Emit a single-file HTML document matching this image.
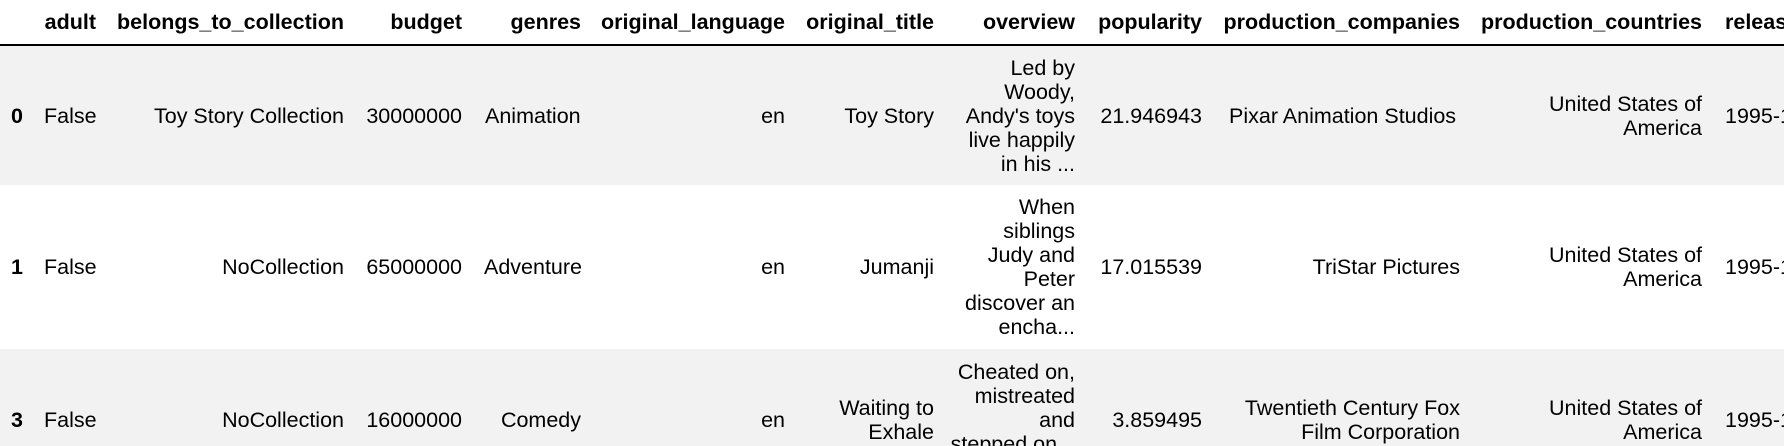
<!DOCTYPE html>
<html><head><meta charset="utf-8"><style>
html,body{margin:0;padding:0;width:1784px;height:446px;overflow:hidden;background:#fff}
#w{position:relative;width:1784px;height:446px;overflow:hidden;font-family:"Liberation Sans",Arial,sans-serif;font-size:21.5px;color:#000}
.r{position:absolute;left:0;width:1784px}
.c{position:absolute;display:flex;align-items:center;line-height:24px;white-space:nowrap}
.R{text-align:right;justify-content:flex-end}
.h{font-weight:bold}
</style></head><body><div id="w">
<div class="r" style="top:44px;height:2px;background:#000"></div>
<div class="r" style="top:46px;height:139px;background:#f2f2f2"></div>
<div class="r" style="top:349px;height:97px;background:#f2f2f2"></div>

<div class="c R h" style="top:0;height:44px;right:1688px">adult</div>
<div class="c R h" style="top:0;height:44px;right:1440px">belongs_to_collection</div>
<div class="c R h" style="top:0;height:44px;right:1322px">budget</div>
<div class="c R h" style="top:0;height:44px;right:1203px">genres</div>
<div class="c R h" style="top:0;height:44px;right:999px">original_language</div>
<div class="c R h" style="top:0;height:44px;right:850px">original_title</div>
<div class="c R h" style="top:0;height:44px;right:709px">overview</div>
<div class="c R h" style="top:0;height:44px;right:582px">popularity</div>
<div class="c R h" style="top:0;height:44px;right:324px">production_companies</div>
<div class="c R h" style="top:0;height:44px;right:82px">production_countries</div>
<div class="c h" style="top:0;height:44px;left:1725px">release_date</div>

<div class="c h" style="top:46px;height:139px;left:11px">0</div>
<div class="c" style="top:46px;height:139px;left:44px">False</div>
<div class="c R" style="top:46px;height:139px;right:1440px">Toy Story Collection</div>
<div class="c R" style="top:46px;height:139px;right:1322px">30000000</div>
<div class="c" style="top:46px;height:139px;left:485px">Animation</div>
<div class="c R" style="top:46px;height:139px;right:999px">en</div>
<div class="c R" style="top:46px;height:139px;right:850px">Toy Story</div>
<div class="c R" style="top:46px;height:139px;right:709px"><div>Led by<br>Woody,<br>Andy's toys<br>live happily<br>in his ...</div></div>
<div class="c R" style="top:46px;height:139px;right:582px">21.946943</div>
<div class="c" style="top:46px;height:139px;left:1229px">Pixar Animation Studios</div>
<div class="c R" style="top:46px;height:139px;right:82px"><div>United States of<br>America</div></div>
<div class="c" style="top:46px;height:139px;left:1725px">1995-10-30</div>

<div class="c h" style="top:185px;height:164px;left:11px">1</div>
<div class="c" style="top:185px;height:164px;left:44px">False</div>
<div class="c R" style="top:185px;height:164px;right:1440px">NoCollection</div>
<div class="c R" style="top:185px;height:164px;right:1322px">65000000</div>
<div class="c" style="top:185px;height:164px;left:484px">Adventure</div>
<div class="c R" style="top:185px;height:164px;right:999px">en</div>
<div class="c R" style="top:185px;height:164px;right:850px">Jumanji</div>
<div class="c R" style="top:185px;height:164px;right:709px"><div>When<br>siblings<br>Judy and<br>Peter<br>discover an<br>encha...</div></div>
<div class="c R" style="top:185px;height:164px;right:582px">17.015539</div>
<div class="c R" style="top:185px;height:164px;right:324px">TriStar Pictures</div>
<div class="c R" style="top:185px;height:164px;right:82px"><div>United States of<br>America</div></div>
<div class="c" style="top:185px;height:164px;left:1725px">1995-12-15</div>

<div class="c h" style="top:349px;height:142px;left:11px">3</div>
<div class="c" style="top:349px;height:142px;left:44px">False</div>
<div class="c R" style="top:349px;height:142px;right:1440px">NoCollection</div>
<div class="c R" style="top:349px;height:142px;right:1322px">16000000</div>
<div class="c R" style="top:349px;height:142px;right:1203px">Comedy</div>
<div class="c R" style="top:349px;height:142px;right:999px">en</div>
<div class="c R" style="top:349px;height:142px;right:850px"><div>Waiting to<br>Exhale</div></div>
<div class="c R" style="top:349px;height:142px;right:709px"><div>Cheated on,<br>mistreated<br>and<br>stepped on...<br>&nbsp;</div></div>
<div class="c R" style="top:349px;height:142px;right:582px">3.859495</div>
<div class="c R" style="top:349px;height:142px;right:324px"><div>Twentieth Century Fox<br>Film Corporation</div></div>
<div class="c R" style="top:349px;height:142px;right:82px"><div>United States of<br>America</div></div>
<div class="c" style="top:349px;height:142px;left:1725px">1995-12-22</div>
</div></body></html>
